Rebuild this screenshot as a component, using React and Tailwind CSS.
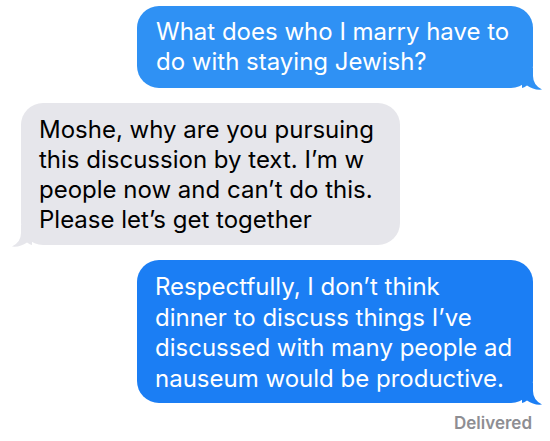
import React from "react";

const font = { fontFamily: 'Inter, "Liberation Sans", Arial, sans-serif' };

// iMessage style tail for outgoing bubbles (bottom right)
function TailRight({ color }) {
  return (
    <svg
      className="absolute right-[-9px] bottom-[-2px]"
      width="20"
      height="22"
      viewBox="0 0 20 22"
    >
      <path
        d="M0 0 H11 V8 Q11 17 20 21.5 Q12 22.5 5 17.5 Q2 19.5 0 20 Z"
        fill={color}
      />
    </svg>
  );
}

// tail for incoming bubble (bottom left)
function TailLeft({ color }) {
  return (
    <svg
      className="absolute left-[-9px] bottom-[-2px]"
      width="20"
      height="22"
      viewBox="0 0 20 22"
    >
      <path
        d="M20 0 H9 V8 Q9 17 0 21.5 Q8 22.5 15 17.5 Q18 19.5 20 20 Z"
        fill={color}
      />
    </svg>
  );
}

export default function App() {
  return (
    <div
      className="w-[550px] h-[441px] bg-white flex flex-col pt-[6px] overflow-hidden"
      style={font}
    >
      {/* outgoing 1 */}
      <div className="relative ml-[137px] w-[396px] h-[82px] rounded-[22px] bg-[#2f91f4] text-white text-[24px] leading-[30px] pl-[19px] pt-[11px]">
        What does who I marry have to
        <br />
        do with staying Jewish?
        <TailRight color="#2f91f4" />
      </div>

      {/* incoming */}
      <div className="relative mt-[15px] ml-[21px] w-[379px] h-[142px] rounded-[22px] bg-[#e6e6eb] text-black text-[24px] leading-[30px] pl-[18px] pt-[12px]">
        Moshe, why are you pursuing
        <br />
        this discussion by text. I’m w
        <br />
        people now and can’t do this.
        <br />
        Please let’s get together
        <TailLeft color="#e6e6eb" />
      </div>

      {/* outgoing 2 */}
      <div className="relative mt-[15px] ml-[137px] w-[396px] h-[143px] rounded-[22px] bg-[#1b7ef4] text-white text-[24px] leading-[30.5px] pl-[18px] pt-[12px]">
        Respectfully, I don’t think
        <br />
        dinner to discuss things I’ve
        <br />
        discussed with many people ad
        <br />
        nauseum would be productive.
        <TailRight color="#1b7ef4" />
      </div>

      <div className="flex justify-end pr-[18px] mt-[8px]">
        <span className="text-[17px] font-semibold text-[#8e8e93]">Delivered</span>
      </div>
    </div>
  );
}
